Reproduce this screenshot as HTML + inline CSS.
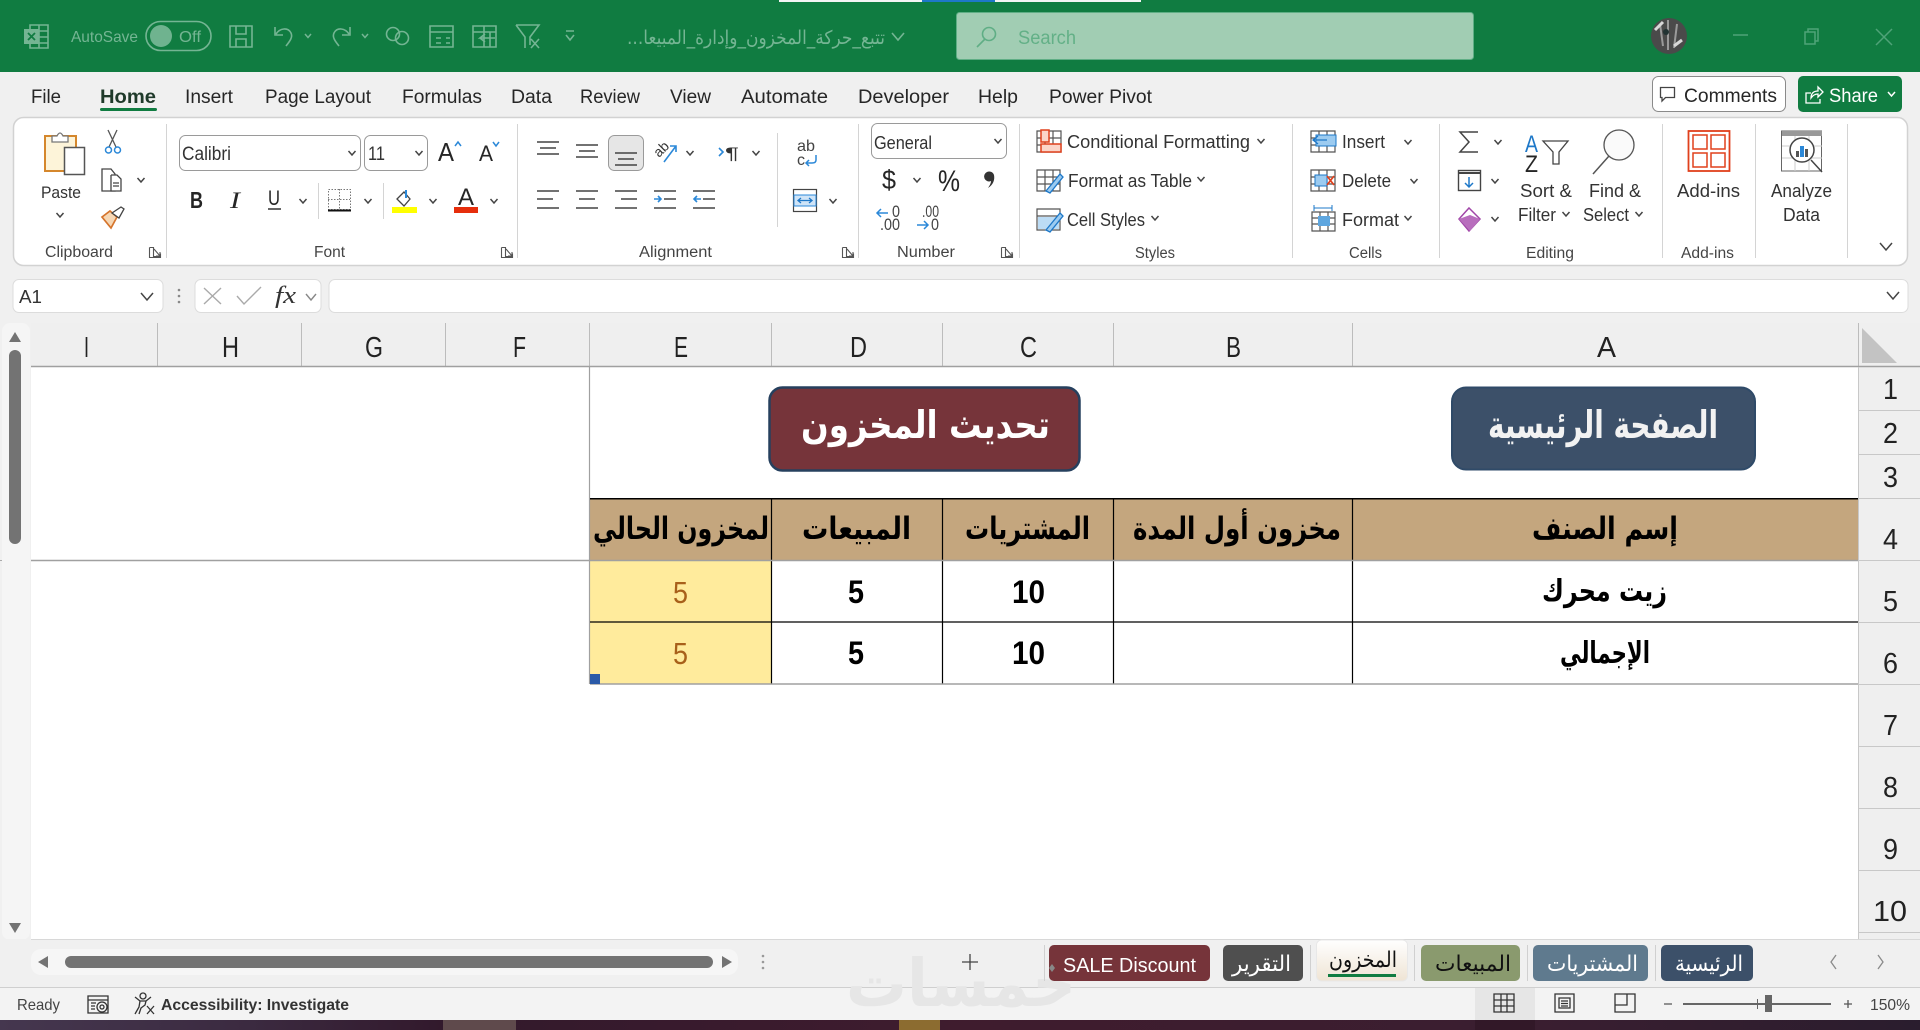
<!DOCTYPE html>
<html lang="en"><head><meta charset="utf-8"><title>Excel</title>
<style>
html,body{margin:0;padding:0;width:1920px;height:1030px;overflow:hidden;background:#f0f0f0}
svg{display:block;position:absolute;left:0;top:0}
text{font-family:"Liberation Sans",sans-serif;fill:#262626}
.tb{font-size:19px;fill:#262626}
.lb{font-size:15.5px;fill:#444}
.bt{font-size:18px;fill:#333}
.ar{font-family:"DejaVu Sans",sans-serif;font-weight:700;fill:#000}
.art{font-family:"DejaVu Sans",sans-serif;font-size:22px}
.col{font-size:29px;fill:#222}
.fd{fill:none;stroke:#74b593;stroke-width:1.6}
.ic{fill:none;stroke:#555;stroke-width:1.5}
.sep{stroke:#d4d4d4;stroke-width:1}
.hl{stroke:#000;stroke-width:1.2}
</style></head><body>
<svg width="1920" height="1030" viewBox="0 0 1920 1030" xmlns="http://www.w3.org/2000/svg">
<defs>
<path id="c" d="M-3.5-2L0 2L3.5-2" fill="none" stroke="#444" stroke-width="1.5"/>
<path id="cf" d="M-3-2L0 1.5L3-2" fill="none" stroke="#74b593" stroke-width="1.5"/>
<linearGradient id="task" x1="0" x2="1" y1="0" y2="0">
<stop offset="0" stop-color="#45374f"/><stop offset=".13" stop-color="#3b2a40"/><stop offset=".23" stop-color="#32192c"/><stop offset=".5" stop-color="#3f1c2e"/><stop offset=".8" stop-color="#3a1e30"/><stop offset="1" stop-color="#2a1d2e"/>
</linearGradient>
<linearGradient id="act" x1="0" x2="0" y1="0" y2="1"><stop offset="0" stop-color="#fff"/><stop offset="1" stop-color="#efe4d4"/></linearGradient>
</defs>

<!-- title bar -->
<rect width="1920" height="72" fill="#107c41"/>
<rect x="779" width="143" height="2" fill="#f4f4f4"/><rect x="922" width="73" height="2" fill="#1e78c8"/><rect x="995" width="146" height="2" fill="#f4f4f4"/>
<g class="fd">
<path d="M30 25h18v23h-18zM39 25v23M39 31h9M39 37h9M39 43h9"/>
<rect x="146" y="21.500" width="65" height="29" rx="14.500"/>
<path d="M230 26h22v21h-22zM236 26v8h10v-8M236 47v-8h10v8"/>
<path d="M275 27v8h8M276 34c4-6 12-7 15-1c2 4-1 8-5 13"/>
<path d="M350 27v8h-8M349 34c-4-6-12-7-15-1c-2 4 1 8 5 13"/>
<circle cx="393" cy="34" r="6.500"/><circle cx="402" cy="38" r="6.500"/>
<path d="M430 26h23v21h-23zM430 32h23M436 38h5M436 43h5M446 38h4M446 43h4"/>
<path d="M473 26h23v21h-23zM473 32h23M484 26v21M490 32v15M495 38h-15l5-4M480 38l5 4"/>
<path d="M516 25h23l-9 12v8M516 25l9 12v11M531 39l8 9M539 39l-8 9"/>
<path d="M566 31h8M566 35l4 5l4-5"/>
</g>
<rect x="24" y="29" width="15" height="15" fill="#74b593"/><path d="M28 33l7 7M35 33l-7 7" stroke="#107c41" stroke-width="1.800"/>
<g fill="none" stroke="#4fa378" stroke-width="1.500"><path d="M1733 35h15"/><path d="M1805 32h10v12h-10zM1808 32v-3h10v12h-3"/><path d="M1876 29l16 16M1892 29l-16 16"/></g>
<circle cx="161" cy="36" r="11" fill="#6fb38f"/>
<text x="71" y="42" font-size="16" textLength="67" lengthAdjust="spacingAndGlyphs" style="fill:#74b593">AutoSave</text>
<text x="179" y="42" font-size="16" textLength="22" lengthAdjust="spacingAndGlyphs" style="fill:#74b593">Off</text>
<use href="#cf" x="308" y="36"/><use href="#cf" x="365" y="36"/>
<text x="627" y="44" class="art" textLength="258" lengthAdjust="spacingAndGlyphs" style="font-size:19px;fill:#74b593">...تتبع_حركة_المخزون_وإدارة_المبيعا</text>
<path d="M892 33l6 7l6-7" fill="none" stroke="#74b593" stroke-width="1.600"/>
<rect x="956.500" y="12.500" width="517" height="47" rx="3" fill="#a1cdb3" stroke="#5fae85"/>
<circle cx="989" cy="34" r="6.500" fill="none" stroke="#5fae85" stroke-width="1.600"/><path d="M985 39l-8 8" stroke="#5fae85" stroke-width="1.600"/>
<text x="1018" y="44" font-size="19" textLength="58" lengthAdjust="spacingAndGlyphs" style="fill:#63b087">Search</text>
<circle cx="1669" cy="36" r="18" fill="#4a4a4a"/><path d="M1660 24l3 22M1668 20v30M1677 24l-3 24" stroke="#9a9a9a" stroke-width="2" fill="none"/><path d="M1655 30l8-8M1674 46l8-6" stroke="#d8d8d8" stroke-width="3"/><circle cx="1666" cy="32" r="3" fill="#233"/>

<!-- menu -->
<text x="31" y="103" textLength="30" lengthAdjust="spacingAndGlyphs" class="tb">File</text>
<text x="100" y="103" textLength="56" lengthAdjust="spacingAndGlyphs" class="tb" style="font-weight:700;fill:#1f3a2a">Home</text>
<text x="185" y="103" textLength="48" lengthAdjust="spacingAndGlyphs" class="tb">Insert</text>
<text x="265" y="103" textLength="106" lengthAdjust="spacingAndGlyphs" class="tb">Page Layout</text>
<text x="402" y="103" textLength="80" lengthAdjust="spacingAndGlyphs" class="tb">Formulas</text>
<text x="511" y="103" textLength="41" lengthAdjust="spacingAndGlyphs" class="tb">Data</text>
<text x="580" y="103" textLength="60" lengthAdjust="spacingAndGlyphs" class="tb">Review</text>
<text x="670" y="103" textLength="41" lengthAdjust="spacingAndGlyphs" class="tb">View</text>
<text x="741" y="103" textLength="87" lengthAdjust="spacingAndGlyphs" class="tb">Automate</text>
<text x="858" y="103" textLength="91" lengthAdjust="spacingAndGlyphs" class="tb">Developer</text>
<text x="978" y="103" textLength="40" lengthAdjust="spacingAndGlyphs" class="tb">Help</text>
<text x="1049" y="103" textLength="103" lengthAdjust="spacingAndGlyphs" class="tb">Power Pivot</text>
<rect x="100" y="108" width="57" height="3" rx="1.500" fill="#107c41"/>
<rect x="1652.500" y="76.500" width="133" height="35" rx="6" fill="#fff" stroke="#8a8a8a"/>
<path d="M1660.500 87.500h14v10h-9l-3.500 3.500v-3.500h-1.500z" fill="none" stroke="#444" stroke-width="1.300"/>
<text x="1684" y="102" textLength="93" lengthAdjust="spacingAndGlyphs" class="tb">Comments</text>
<rect x="1798" y="76" width="104" height="36" rx="5" fill="#107c41"/>
<path d="M1811 93h-5v10h14v-4M1811 98c0-5 3-7 7-7v-4l5 5l-5 5v-3c-3 0-5 1-7 4z" fill="none" stroke="#fff" stroke-width="1.300"/>
<text x="1829" y="102" textLength="49" lengthAdjust="spacingAndGlyphs" class="tb" style="fill:#fff">Share</text>
<path d="M1888 92l3.500 4l3.500-4" fill="none" stroke="#fff" stroke-width="1.500"/>

<!-- ribbon -->
<rect x="13.500" y="117.500" width="1894" height="148" rx="10" fill="#fff" stroke="#d2d2d2" stroke-width="1.500"/>
<g class="sep"><path d="M166.500 124v134M517.500 124v134M858.500 124v134M1019.500 124v134M1292.500 124v134M1439.500 124v134M1662.500 124v134M1755.500 124v134M1847.500 124v134M777.500 133v94M318.500 183v36M383.500 183v36"/></g>

<!-- clipboard -->
<rect x="45" y="136" width="31" height="35" fill="#fdf4d9" stroke="#d5872c" stroke-width="2"/>
<path d="M52 142v-6h5q3-6 6 0h5v6z" fill="#fff" stroke="#777" stroke-width="1.300"/>
<rect x="64.500" y="147.500" width="20" height="27" fill="#fff" stroke="#555" stroke-width="1.500"/>
<path d="M108 130l8 17M117 130l-8 17" stroke="#555" stroke-width="1.300" fill="none"/>
<circle cx="108.500" cy="150" r="3" fill="none" stroke="#2b88d8" stroke-width="1.500"/><circle cx="117.500" cy="150" r="3" fill="none" stroke="#2b88d8" stroke-width="1.500"/>
<path d="M102 169h9l4 5v17h-13z" fill="none" stroke="#444" stroke-width="1.300"/><path d="M111 175h6l4 4v12h-10v-16M113 183h6M113 186h6" fill="#fff" stroke="#444" stroke-width="1.300"/>
<path d="M102 217l8-6l7 6l-6 11z" fill="#f6d7b4" stroke="#d5742c" stroke-width="1.700"/><path d="M112 213l9-6l3 2l-5 9z" fill="#fff" stroke="#444" stroke-width="1.300"/>
<use href="#c" x="141" y="180"/><use href="#c" x="60" y="215"/>
<text x="41" y="198" font-size="17" textLength="40" lengthAdjust="spacingAndGlyphs" class="bt" style="font-size:17px">Paste</text>
<text x="45" y="257" textLength="68" lengthAdjust="spacingAndGlyphs" class="lb">Clipboard</text>
<g fill="none" stroke="#555" stroke-width="1.100"><path d="M149.500 247.500h4v9h7M149.500 247.500v10h11v-4M154 249l6 7M160 252v4h-4"/>
<path d="M501.500 247.500h4v9h7M501.500 247.500v10h11v-4M506 249l6 7M512 252v4h-4"/>
<path d="M842.500 247.500h4v9h7M842.500 247.500v10h11v-4M847 249l6 7M853 252v4h-4"/>
<path d="M1001.500 247.500h4v9h7M1001.500 247.500v10h11v-4M1006 249l6 7M1012 252v4h-4"/></g>

<!-- font -->
<rect x="179.500" y="135.500" width="181" height="35" rx="6" fill="#fff" stroke="#9a9a9a"/>
<rect x="364.500" y="135.500" width="63" height="35" rx="6" fill="#fff" stroke="#9a9a9a"/>
<text x="182" y="160" textLength="49" lengthAdjust="spacingAndGlyphs" class="bt" style="font-size:19px">Calibri</text>
<text x="368" y="160" textLength="17" lengthAdjust="spacingAndGlyphs" class="bt" style="font-size:19px">11</text>
<use href="#c" x="352" y="153"/><use href="#c" x="419" y="153"/>
<text x="438" y="161" font-size="26" textLength="16" lengthAdjust="spacingAndGlyphs">A</text><path d="M455 146l3-4l3 4" fill="none" stroke="#2b88d8" stroke-width="1.500"/>
<text x="479" y="161" font-size="22" textLength="14" lengthAdjust="spacingAndGlyphs">A</text><path d="M493 142l3 4l3-4" fill="none" stroke="#2b88d8" stroke-width="1.500"/>
<text x="190" y="208" font-size="23" font-weight="700" textLength="13" lengthAdjust="spacingAndGlyphs">B</text>
<text x="230" y="208" font-size="23" font-style="italic" textLength="10" lengthAdjust="spacingAndGlyphs" style="font-family:'Liberation Serif',serif">I</text>
<text x="268" y="205" font-size="21" textLength="12" lengthAdjust="spacingAndGlyphs">U</text><path d="M268 209h13" stroke="#333" stroke-width="1.500"/>
<use href="#c" x="303" y="201"/><use href="#c" x="368" y="201"/><use href="#c" x="433" y="201"/><use href="#c" x="494" y="201"/>
<rect x="328.500" y="189.500" width="22" height="20" fill="none" stroke="#777" stroke-dasharray="1.500 1.500"/><path d="M339.500 189v20M328 199.500h22" stroke="#777" stroke-dasharray="1.500 1.500"/><path d="M328 210.500h23" stroke="#111" stroke-width="2"/>
<path d="M397 199l7-7l6 7l-6 7z" fill="#fff" stroke="#444" stroke-width="1.300"/><path d="M406 190v8" stroke="#2b88d8" stroke-width="2"/>
<rect x="392" y="207" width="25" height="6" fill="#ffff00"/>
<text x="458" y="205" font-size="24" textLength="16" lengthAdjust="spacingAndGlyphs">A</text><rect x="454" y="207" width="24" height="6" fill="#e62e0c"/>
<text x="314" y="257" textLength="31" lengthAdjust="spacingAndGlyphs" class="lb">Font</text>

<!-- alignment -->
<rect x="608.500" y="135.500" width="35" height="35" rx="6" fill="#e6e6e6" stroke="#9a9a9a"/>
<g stroke="#444" stroke-width="1.600">
<path d="M537 142h22M540 148h16M537 154h22"/>
<path d="M576 145h22M579 151h16M576 157h22"/>
<path d="M615 153h22M618 159h16M615 165h22"/>
<path d="M537 191h22M537 199h16M537 208h22M576 191h22M579 199h16M576 208h22M615 191h22M621 199h16M615 208h22"/>
<path d="M654 191h22M664 199h12M654 208h22M693 191h22M703 199h12M693 208h22"/>
</g>
<path d="M654 199h7M658 196l3 3l-3 3M701 199h-7M697 196l-3 3l3 3" fill="none" stroke="#2b88d8" stroke-width="1.600"/>
<text x="0" y="0" font-size="14" transform="translate(659 158) rotate(-45)" style="fill:#333">ab</text><path d="M664 162l12-16M670 146h6v6" fill="none" stroke="#2b88d8" stroke-width="1.600"/>
<use href="#c" x="690" y="153"/><use href="#c" x="756" y="153"/><use href="#c" x="833" y="201"/>
<path d="M719 148l4 4l-4 4" fill="none" stroke="#2b88d8" stroke-width="1.600"/>
<text x="725" y="159" font-size="17" textLength="14" lengthAdjust="spacingAndGlyphs" style="fill:#333">¶</text>
<text x="797" y="151" font-size="16" textLength="18" lengthAdjust="spacingAndGlyphs" style="fill:#444">ab</text>
<text x="797" y="165" font-size="16" textLength="8" lengthAdjust="spacingAndGlyphs" style="fill:#444">c</text><path d="M816 155v5q0 3-4 3h-5M809 160l-3 3l3 3" fill="none" stroke="#2b88d8" stroke-width="1.500"/>
<rect x="793.500" y="189.500" width="23" height="22" fill="#fff" stroke="#444" stroke-width="1.200"/><rect x="794" y="195" width="22" height="11" fill="#cfe4f7" stroke="#2b88d8"/><path d="M798 200.500h14M801 198l-3 2.500l3 2.500M809 198l3 2.500l-3 2.500" fill="none" stroke="#1e78c8" stroke-width="1.300"/>
<text x="639" y="257" textLength="73" lengthAdjust="spacingAndGlyphs" class="lb">Alignment</text>

<!-- number -->
<rect x="871.500" y="123.500" width="135" height="35" rx="6" fill="#fff" stroke="#9a9a9a"/>
<text x="874" y="149" textLength="58" lengthAdjust="spacingAndGlyphs" class="bt">General</text>
<use href="#c" x="998" y="141"/><use href="#c" x="917" y="180"/>
<text x="882" y="189" font-size="27" textLength="14" lengthAdjust="spacingAndGlyphs">$</text>
<text x="938" y="191" font-size="30" textLength="22" lengthAdjust="spacingAndGlyphs">%</text>
<path d="M987 172a5 5 0 0 1 7 3c1 5-1 10-6 13c2-3 3-5 3-7a4.500 4.500 0 0 1-4-9z" fill="#333"/>
<text x="892" y="217" font-size="17" textLength="8" lengthAdjust="spacingAndGlyphs" style="fill:#444">0</text><text x="880" y="230" font-size="17" textLength="20" lengthAdjust="spacingAndGlyphs" style="fill:#444">.00</text><path d="M888 213h-11M881 209l-4 4l4 4" fill="none" stroke="#2b88d8" stroke-width="1.500"/>
<text x="922" y="217" font-size="17" textLength="17" lengthAdjust="spacingAndGlyphs" style="fill:#444">.00</text><text x="931" y="230" font-size="17" textLength="8" lengthAdjust="spacingAndGlyphs" style="fill:#444">0</text><path d="M917 225h11M924 221l4 4l-4 4" fill="none" stroke="#2b88d8" stroke-width="1.500"/>
<text x="897" y="257" textLength="58" lengthAdjust="spacingAndGlyphs" class="lb">Number</text>

<!-- styles -->
<g class="ic" style="stroke-width:1.200">
<path d="M1037 131h24v21h-24zM1045 131v21M1053 131v21M1037 138h24M1037 145h24"/>
<path d="M1037 170h23v21h-23zM1037 177h23M1045 170v21M1053 170v21M1037 184h23"/>
<path d="M1037 209h23v21h-23zM1037 216h23"/>
<path d="M1311 131h24v21h-24zM1319 131v21M1327 131v21M1311 138h24M1311 145h24"/>
<path d="M1311 170h24v21h-24zM1319 170v21M1327 170v21M1311 177h24M1311 184h24"/>
<path d="M1312 212h23v19h-23zM1320 212v19M1328 212v19M1312 218h23M1312 224h23"/>
</g>
<rect x="1041" y="130" width="8" height="12" fill="#fbd5c9" stroke="#e0401c" stroke-width="1.500"/><rect x="1041" y="144" width="20" height="8" fill="#fbd5c9" stroke="#e0401c" stroke-width="1.500"/>
<path d="M1046 191l14-17l3 3l-13 16z" fill="#9ccbf0" stroke="#1e78c8" stroke-width="1.300"/>
<rect x="1038" y="217" width="21" height="12" fill="#bcdcf5"/><path d="M1046 230l14-17l3 3l-13 16z" fill="#9ccbf0" stroke="#1e78c8" stroke-width="1.300"/>
<rect x="1316" y="135" width="20" height="11" fill="#9ccbf0" stroke="#1e78c8"/><path d="M1327 140h-14M1318 136l-5 4l5 4" fill="none" stroke="#1e78c8" stroke-width="1.300"/>
<rect x="1315" y="175" width="12" height="11" fill="#9ccbf0" stroke="#1e78c8"/><path d="M1327 176l7 9M1334 176l-7 9" stroke="#e0401c" stroke-width="1.700"/>
<rect x="1318" y="216" width="12" height="10" fill="#5ea6df"/><path d="M1314 208h18M1314 205v6M1332 205v6" stroke="#1e78c8" fill="none"/>
<text x="1067" y="148" textLength="183" lengthAdjust="spacingAndGlyphs" class="bt">Conditional Formatting</text>
<text x="1068" y="187" textLength="124" lengthAdjust="spacingAndGlyphs" class="bt">Format as Table</text>
<text x="1067" y="226" textLength="78" lengthAdjust="spacingAndGlyphs" class="bt">Cell Styles</text>
<use href="#c" x="1261" y="141"/><use href="#c" x="1201" y="179"/><use href="#c" x="1155" y="218"/>
<text x="1135" y="258" textLength="40" lengthAdjust="spacingAndGlyphs" class="lb">Styles</text>
<text x="1342" y="148" textLength="43" lengthAdjust="spacingAndGlyphs" class="bt">Insert</text>
<text x="1342" y="187" textLength="49" lengthAdjust="spacingAndGlyphs" class="bt">Delete</text>
<text x="1342" y="226" textLength="57" lengthAdjust="spacingAndGlyphs" class="bt">Format</text>
<use href="#c" x="1408" y="142"/><use href="#c" x="1414" y="181"/><use href="#c" x="1408" y="218"/>
<text x="1349" y="258" textLength="33" lengthAdjust="spacingAndGlyphs" class="lb">Cells</text>

<!-- editing -->
<path d="M1478 132h-18l9 10l-9 10h18" fill="none" stroke="#444" stroke-width="1.500"/>
<rect x="1458.500" y="170.500" width="22" height="20" fill="none" stroke="#444" stroke-width="1.400"/><path d="M1458 173h23" stroke="#444" stroke-width="2"/><path d="M1469 177v10M1465 183l4 4l4-4" fill="none" stroke="#1e78c8" stroke-width="1.500"/>
<path d="M1469 208l11 11l-11 12l-10-12z" fill="#fff" stroke="#a146a8" stroke-width="1.500"/><path d="M1459 219l11 12l10-12l-10-4z" fill="#b86ebd"/>
<use href="#c" x="1498" y="142"/><use href="#c" x="1495" y="181"/><use href="#c" x="1495" y="219"/>
<text x="1525" y="152" font-size="24" textLength="13" lengthAdjust="spacingAndGlyphs" style="fill:#1e78c8">A</text>
<text x="1525" y="172" font-size="24" textLength="13" lengthAdjust="spacingAndGlyphs">Z</text>
<path d="M1543 141h25l-9 11v12h-6v-12z" fill="none" stroke="#444" stroke-width="1.300"/>
<circle cx="1619" cy="145" r="15" fill="#fafafa" stroke="#555" stroke-width="1.300"/><path d="M1609 156l-16 18" stroke="#555" stroke-width="1.500"/>
<text x="1520" y="197" textLength="52" lengthAdjust="spacingAndGlyphs" class="bt">Sort &amp;</text>
<text x="1518" y="221" textLength="38" lengthAdjust="spacingAndGlyphs" class="bt">Filter</text>
<text x="1589" y="197" textLength="52" lengthAdjust="spacingAndGlyphs" class="bt">Find &amp;</text>
<text x="1583" y="221" textLength="46" lengthAdjust="spacingAndGlyphs" class="bt">Select</text>
<use href="#c" x="1566" y="214"/><use href="#c" x="1639" y="214"/>
<text x="1526" y="258" textLength="48" lengthAdjust="spacingAndGlyphs" class="lb">Editing</text>

<!-- add-ins / analyze -->
<rect x="1688.500" y="131" width="41" height="40" fill="#fff" stroke="#e0401c" stroke-width="1.800"/>
<g fill="none" stroke="#e0401c" stroke-width="1.500"><rect x="1693" y="135" width="14" height="14"/><rect x="1711" y="135" width="14" height="14"/><rect x="1693" y="153" width="14" height="14"/><rect x="1711" y="153" width="14" height="14"/></g>
<text x="1677" y="197" textLength="63" lengthAdjust="spacingAndGlyphs" class="bt">Add-ins</text>
<text x="1681" y="258" textLength="53" lengthAdjust="spacingAndGlyphs" class="lb">Add-ins</text>
<rect x="1781.500" y="131" width="40" height="40" fill="#fff" stroke="#666"/><rect x="1782" y="131" width="40" height="5" fill="#999"/>
<path d="M1782 146h40M1782 158h40M1795 136v35M1809 136v35" stroke="#ccc" fill="none"/>
<circle cx="1802" cy="150" r="12" fill="#fff" stroke="#444" stroke-width="1.500"/><rect x="1796" y="151" width="3" height="6" fill="#555"/><rect x="1800" y="146" width="4" height="11" fill="#2b88d8"/><rect x="1805" y="149" width="3" height="8" fill="#555"/><path d="M1811 160l11 12" stroke="#444" stroke-width="1.500"/>
<text x="1771" y="197" textLength="61" lengthAdjust="spacingAndGlyphs" class="bt">Analyze</text>
<text x="1783" y="221" textLength="37" lengthAdjust="spacingAndGlyphs" class="bt">Data</text>
<path d="M1880 243l6 7l6-7" fill="none" stroke="#444" stroke-width="1.500"/>

<!-- formula bar -->
<rect x="13" y="279.500" width="150" height="33" rx="6" fill="#fff" stroke="#dcdcdc"/>
<text x="19" y="303" textLength="23" lengthAdjust="spacingAndGlyphs" class="bt">A1</text>
<path d="M141 293l6 7l6-7" fill="none" stroke="#444" stroke-width="1.500"/>
<circle cx="179" cy="290" r="1.300" fill="#888"/><circle cx="179" cy="296" r="1.300" fill="#888"/><circle cx="179" cy="302" r="1.300" fill="#888"/>
<rect x="195" y="279.500" width="126" height="33" rx="6" fill="#fff" stroke="#dcdcdc"/>
<path d="M204 288l17 16M221 288l-17 16" stroke="#aaa" stroke-width="1.400"/><path d="M237 296l7 8l17-17" fill="none" stroke="#aaa" stroke-width="1.400"/>
<text x="275" y="303" font-size="24" font-style="italic" textLength="21" lengthAdjust="spacingAndGlyphs" style="font-family:'Liberation Serif',serif;fill:#333">fx</text>
<path d="M306 294l5 6l5-6" fill="none" stroke="#888" stroke-width="1.400"/>
<rect x="329" y="279.500" width="1579" height="33" rx="6" fill="#fff" stroke="#dcdcdc"/>
<path d="M1887 292l6 7l6-7" fill="none" stroke="#444" stroke-width="1.500"/>

<!-- grid chrome -->
<rect x="2" y="323" width="28" height="617" rx="8" fill="#f5f5f5"/>
<path d="M15 332l-6 10h12z" fill="#737373"/><rect x="9" y="350" width="12" height="194" rx="6" fill="#737373"/><path d="M15 933l-6-10h12z" fill="#737373"/>
<rect x="0" y="560" width="2" height="1" fill="#aaa"/>
<rect x="31" y="323" width="1889" height="44" fill="#efefef"/>
<rect x="31" y="367" width="1827" height="572" fill="#fff"/>
<rect x="1858" y="367" width="62" height="572" fill="#efefef"/>
<path d="M1862 328l35 35h-35z" fill="#c3c3c3"/>
<path d="M157.500 323v44M301.500 323v44M445.500 323v44M589.500 323v44M771.500 323v44M942.500 323v44M1113.500 323v44M1352.500 323v44M1858.500 323v44" stroke="#bcbcbc"/>
<path d="M31 366.500h1889" stroke="#a0a0a0" stroke-width="1.500"/>
<path d="M1858.500 367v572M1858 410.500h62M1858 454.500h62M1858 498.500h62M1858 560.500h62M1858 622.500h62M1858 684.500h62M1858 746.500h62M1858 808.500h62M1858 870.500h62M1858 932.500h62" stroke="#c8c8c8" fill="none"/>
<text x="84" y="357" class="col" textLength="5" lengthAdjust="spacingAndGlyphs">I</text>
<text x="222" y="357" class="col" textLength="17" lengthAdjust="spacingAndGlyphs">H</text>
<text x="365" y="357" class="col" textLength="18" lengthAdjust="spacingAndGlyphs">G</text>
<text x="513" y="357" class="col" textLength="13" lengthAdjust="spacingAndGlyphs">F</text>
<text x="674" y="357" class="col" textLength="14" lengthAdjust="spacingAndGlyphs">E</text>
<text x="850" y="357" class="col" textLength="17" lengthAdjust="spacingAndGlyphs">D</text>
<text x="1020" y="357" class="col" textLength="17" lengthAdjust="spacingAndGlyphs">C</text>
<text x="1226" y="357" class="col" textLength="15" lengthAdjust="spacingAndGlyphs">B</text>
<text x="1597" y="357" class="col" textLength="19" lengthAdjust="spacingAndGlyphs">A</text>
<text x="1883" y="399" class="col" textLength="15" lengthAdjust="spacingAndGlyphs">1</text>
<text x="1883" y="443" class="col" textLength="15" lengthAdjust="spacingAndGlyphs">2</text>
<text x="1883" y="487" class="col" textLength="15" lengthAdjust="spacingAndGlyphs">3</text>
<text x="1883" y="549" class="col" textLength="15" lengthAdjust="spacingAndGlyphs">4</text>
<text x="1883" y="611" class="col" textLength="15" lengthAdjust="spacingAndGlyphs">5</text>
<text x="1883" y="673" class="col" textLength="15" lengthAdjust="spacingAndGlyphs">6</text>
<text x="1883" y="735" class="col" textLength="15" lengthAdjust="spacingAndGlyphs">7</text>
<text x="1883" y="797" class="col" textLength="15" lengthAdjust="spacingAndGlyphs">8</text>
<text x="1883" y="859" class="col" textLength="15" lengthAdjust="spacingAndGlyphs">9</text>
<text x="1873" y="921" class="col" textLength="34" lengthAdjust="spacingAndGlyphs">10</text>

<!-- table -->
<rect x="590" y="499" width="1268" height="61" fill="#c4a67e"/>
<rect x="590" y="561" width="181" height="123" fill="#ffeb9c"/>
<path d="M589.500 367v317" stroke="#a0a0a0" stroke-width="1.200"/>
<path d="M771.500 499v185M942.500 499v185M1113.500 499v185M1352.500 499v185" class="hl" fill="none"/>
<path d="M590 498.700h1268" stroke="#000" stroke-width="1.500"/><path d="M590 622h1268" class="hl"/>
<path d="M31 560.500h1827M590 684h1268" stroke="#a0a0a0" stroke-width="1.500"/>
<rect x="590" y="674" width="10" height="10" fill="#2a5aa8"/>

<text x="1532" y="539" class="ar" font-size="31" textLength="146" lengthAdjust="spacingAndGlyphs">إسم الصنف</text>
<text x="1133" y="539" class="ar" font-size="31" textLength="208" lengthAdjust="spacingAndGlyphs">مخزون أول المدة</text>
<text x="965" y="539" class="ar" font-size="31" textLength="125" lengthAdjust="spacingAndGlyphs">المشتريات</text>
<text x="802" y="539" class="ar" font-size="31" textLength="109" lengthAdjust="spacingAndGlyphs">المبيعات</text>
<text x="593" y="539" class="ar" font-size="31" textLength="176" lengthAdjust="spacingAndGlyphs">لمخزون الحالي</text>
<text x="1542" y="601" class="ar" font-size="30" textLength="125" lengthAdjust="spacingAndGlyphs">زيت محرك</text>
<text x="1560" y="663" class="ar" font-size="30" textLength="90" lengthAdjust="spacingAndGlyphs">الإجمالي</text>
<g font-size="32" font-weight="700">
<text x="1012" y="603" textLength="33" lengthAdjust="spacingAndGlyphs" style="fill:#000">10</text>
<text x="1012" y="664" textLength="33" lengthAdjust="spacingAndGlyphs" style="fill:#000">10</text>
<text x="848" y="603" textLength="16" lengthAdjust="spacingAndGlyphs" style="fill:#000">5</text>
<text x="848" y="664" textLength="16" lengthAdjust="spacingAndGlyphs" style="fill:#000">5</text>
</g>
<g font-size="31"><text x="673" y="603" textLength="15" lengthAdjust="spacingAndGlyphs" style="fill:#a8601a">5</text>
<text x="673" y="664" textLength="15" lengthAdjust="spacingAndGlyphs" style="fill:#a8601a">5</text></g>

<!-- buttons -->
<rect x="769.500" y="387.500" width="310" height="83" rx="13" fill="#76343a" stroke="#26405e" stroke-width="2.500"/>
<rect x="1452" y="387.500" width="303" height="82" rx="14" fill="#3c5069" stroke="#2f4a68" stroke-width="2"/>
<text x="801" y="438" class="ar" font-size="38" textLength="249" lengthAdjust="spacingAndGlyphs" style="fill:#fff">تحديث المخزون</text>
<text x="1488" y="438" class="ar" font-size="38" textLength="230" lengthAdjust="spacingAndGlyphs" style="fill:#f2f2f2">الصفحة الرئيسية</text>

<!-- tabs bar -->
<rect x="0" y="939" width="1920" height="48" fill="#f0f0f0"/>
<path d="M31 939.500h1889" stroke="#d8d8d8"/>
<rect x="31" y="949" width="707" height="26" rx="10" fill="#f6f6f6"/>
<rect x="65" y="956" width="648" height="12" rx="6" fill="#737373"/>
<path d="M38 962l10-6v12zM732 962l-10-6v12z" fill="#737373"/>
<circle cx="763" cy="956" r="1.300" fill="#999"/><circle cx="763" cy="962" r="1.300" fill="#999"/><circle cx="763" cy="968" r="1.300" fill="#999"/>
<path d="M970 954v16M962 962h16" stroke="#444" stroke-width="1.300"/>

<!-- status -->
<rect x="0" y="987" width="1920" height="33" fill="#f3f3f3"/>
<path d="M0 987.500h1920" stroke="#cfcfcf"/>
<text x="846" y="1006" font-size="66" font-weight="700" textLength="230" lengthAdjust="spacingAndGlyphs" style="font-family:'DejaVu Sans',sans-serif;fill:#e6e6e6">خمسات</text>

<path d="M1044.500 945v36M1310.500 945v36M1414.500 945v36M1527.500 945v36M1655.500 945v36" stroke="#d0d0d0"/>
<rect x="1049" y="945" width="161" height="36" rx="5" fill="#76343a"/>
<rect x="1223" y="945" width="80" height="36" rx="5" fill="#4f4f4f"/>
<rect x="1316.500" y="940" width="91" height="41" rx="5" fill="url(#act)" stroke="#e8e8e8"/>
<rect x="1421" y="945" width="99" height="36" rx="5" fill="#8a9a6e"/>
<rect x="1533" y="945" width="115" height="36" rx="5" fill="#5f7a8e"/>
<rect x="1661" y="945" width="92" height="36" rx="5" fill="#3c5069"/>
<path d="M1052 964l3 4l-3 4l-3-4z" fill="#888"/>
<text x="1063" y="972" font-size="20" textLength="133" lengthAdjust="spacingAndGlyphs" style="fill:#fff">SALE Discount</text>
<text x="1232" y="971" class="art" textLength="59" lengthAdjust="spacingAndGlyphs" style="fill:#fff">التقرير</text>
<text x="1329" y="967" class="art" textLength="68" lengthAdjust="spacingAndGlyphs" style="fill:#111">المخزون</text>
<rect x="1328" y="974" width="68" height="3" fill="#107c41"/>
<text x="1435" y="971" class="art" textLength="76" lengthAdjust="spacingAndGlyphs" style="fill:#111">المبيعات</text>
<text x="1547" y="971" class="art" textLength="91" lengthAdjust="spacingAndGlyphs" style="fill:#fff">المشتريات</text>
<text x="1675" y="971" class="art" textLength="68" lengthAdjust="spacingAndGlyphs" style="fill:#fff">الرئيسية</text>
<path d="M1836 955l-5 7l5 7M1878 955l5 7l-5 7" fill="none" stroke="#8a8a8a" stroke-width="1.300"/>

<text x="17" y="1010" font-size="16" textLength="43" lengthAdjust="spacingAndGlyphs" style="fill:#444">Ready</text>
<g fill="none" stroke="#333" stroke-width="1.300"><path d="M88 996h20v17h-20zM88 1000h20M91 1003h5M91 1006h4M91 1009h4"/><circle cx="102" cy="1007" r="5"/><circle cx="102" cy="1007" r="2"/>
<circle cx="143" cy="996" r="3"/><path d="M135 997l5 4h6l5-4M140 1001l-1 6l-4 7M146 1001l-1 4l-4 3l-2 6M147 1006l7 8M154 1006l-7 8"/></g>
<text x="161" y="1010" font-size="15.500" font-weight="700" textLength="188" lengthAdjust="spacingAndGlyphs" style="fill:#333">Accessibility: Investigate</text>
<rect x="1475" y="988" width="60" height="32" fill="#e6e6e6"/>
<g fill="none" stroke="#333" stroke-width="1.300"><path d="M1494 994h20v18h-20zM1494 1000h20M1494 1006h20M1501 994v18M1507 994v18"/>
<path d="M1555 994h19v18h-19zM1559 998h11v10h-11zM1561 1001h7M1561 1003.500h7M1561 1006h7"/>
<path d="M1615 994h20v18h-20zM1615 1005h12v-11"/></g>
<path d="M1664 1004h8M1844 1004h8M1848 1000v8" stroke="#555" stroke-width="1.300"/>
<rect x="1683" y="1003" width="148" height="2" fill="#666"/><rect x="1757" y="999" width="1" height="10" fill="#666"/><rect x="1765" y="995" width="7" height="17" fill="#666"/>
<text x="1870" y="1010" font-size="16" textLength="40" lengthAdjust="spacingAndGlyphs" style="fill:#444">150%</text>

<!-- taskbar -->
<rect x="0" y="1020" width="1920" height="10" fill="url(#task)"/>
<rect x="443" y="1020" width="73" height="10" fill="#5f4a4c"/>
<rect x="899" y="1020" width="41" height="10" fill="#8c6c30"/>
<rect x="1475" y="1020" width="60" height="10" fill="#321828"/>
</svg>
</body></html>
